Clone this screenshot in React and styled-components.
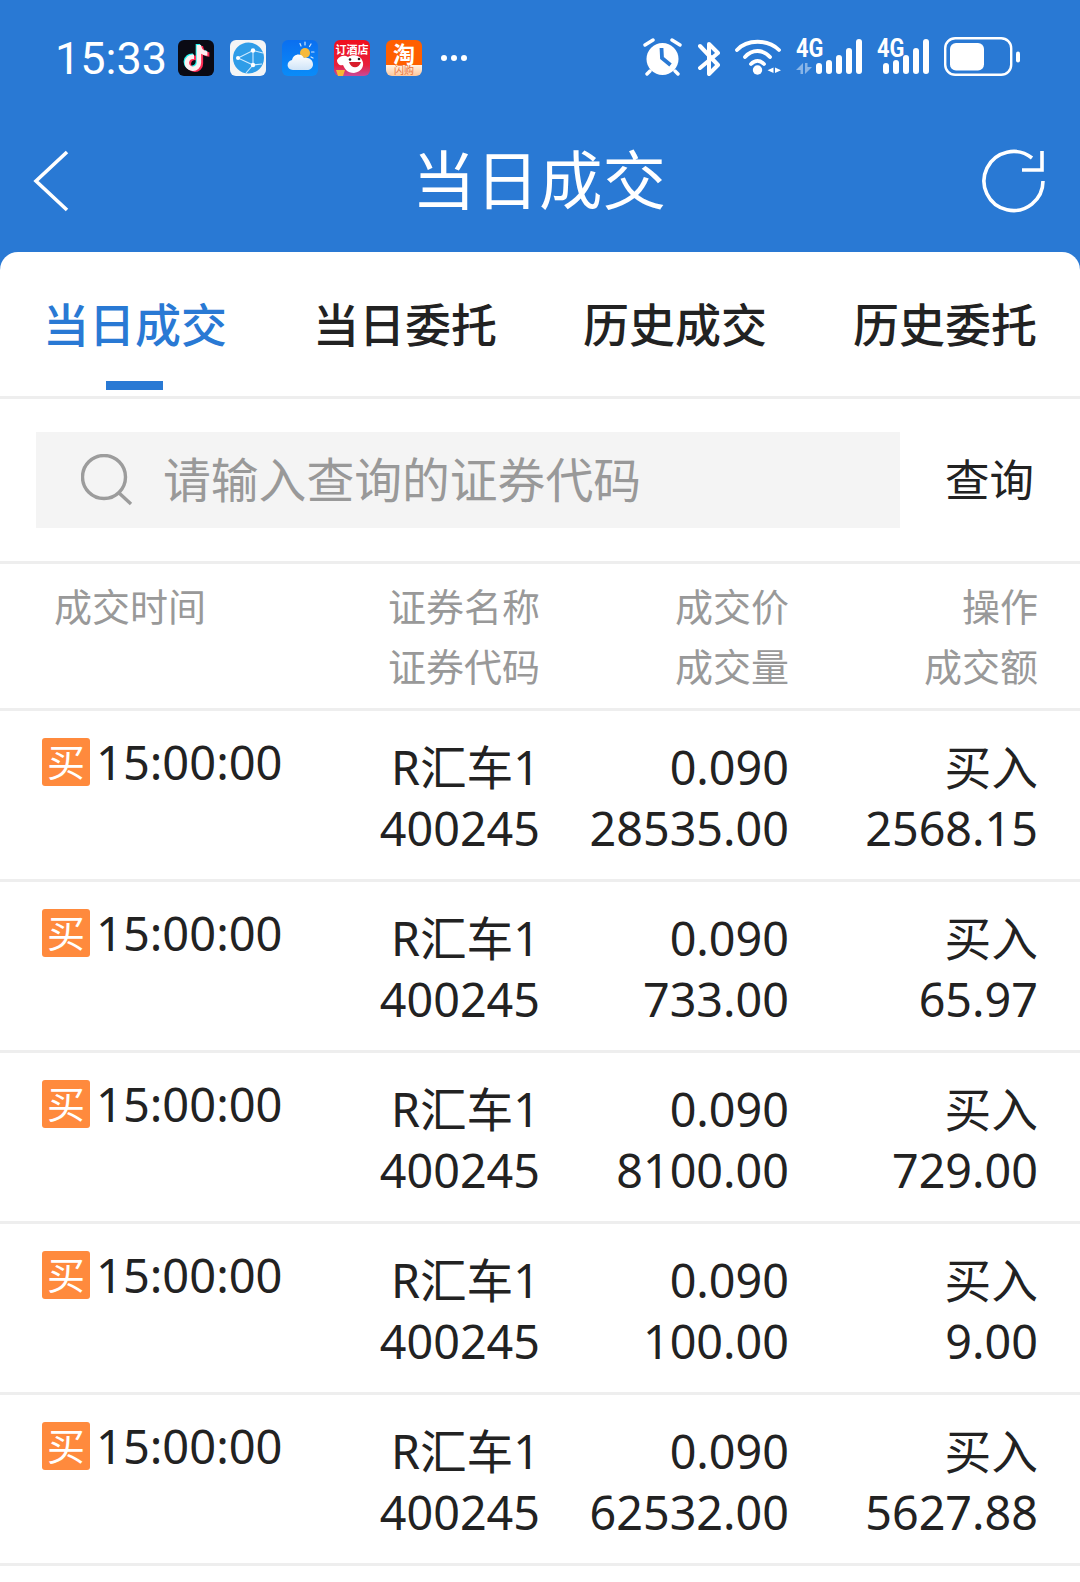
import React from 'react';
import styled, { createGlobalStyle } from 'styled-components';
import { FaTiktok } from 'react-icons/fa';

const rows = [
  { qty: '28535.00', amount: '2568.15' },
  { qty: '733.00', amount: '65.97' },
  { qty: '8100.00', amount: '729.00' },
  { qty: '100.00', amount: '9.00' },
  { qty: '62532.00', amount: '5627.88' },
];

const tabs = ['当日成交', '当日委托', '历史成交', '历史委托'];

const TikTokIcon = () => (
  <TikTokTile>
    <TikTokLayer $x={-1.5} $y={-1} $color="#25f4ee"><FaTiktok size={26} /></TikTokLayer>
    <TikTokLayer $x={1.5} $y={1} $color="#fe2c55"><FaTiktok size={26} /></TikTokLayer>
    <TikTokLayer $x={0} $y={0} $color="#fdeef0"><FaTiktok size={26} /></TikTokLayer>
  </TikTokTile>
);

const BrowserIcon = () => (
  <svg width="36" height="36" viewBox="0 0 36 36">
    <rect width="36" height="36" rx="6" fill="#f4f5f6" />
    <circle cx="18.5" cy="18" r="15.5" fill="#2f9de8" />
    <path d="M33 13 L23 10.5 L8 18 L23 25 L16 33 M23 10.5 L23 25 L32 24" fill="none" stroke="#cfeaff" strokeWidth="1.1" />
    <circle cx="23" cy="10.5" r="2.2" fill="#fff" />
    <circle cx="8" cy="18" r="2" fill="#fff" />
    <circle cx="23" cy="25" r="2.2" fill="#fff" />
  </svg>
);

const WeatherIcon = () => (
  <svg width="36" height="36" viewBox="0 0 36 36">
    <defs>
      <linearGradient id="sky" x1="0" y1="0" x2="0" y2="1">
        <stop offset="0" stopColor="#0a6ff0" />
        <stop offset="1" stopColor="#0a8cf8" />
      </linearGradient>
      <linearGradient id="cloud" x1="0" y1="0" x2="0" y2="1">
        <stop offset="0" stopColor="#ffffff" />
        <stop offset="1" stopColor="#cfe4f8" />
      </linearGradient>
    </defs>
    <rect width="36" height="36" rx="6" fill="url(#sky)" />
    <path d="M18 3.5 L19 6 M23 2 V5 M29 4 L27.5 6.5 M32 12 H29.5 M31 18 L29 17" stroke="#cfe6ff" strokeWidth="1.2" strokeLinecap="round" />
    <circle cx="23" cy="13" r="5" fill="#f6b93b" />
    <path d="M11 30 C4 30 4 21 10 20 C11 14 19 12 22 18 C27 17 31 20 31 24.5 C31 28 28 30 25 30 Z" fill="url(#cloud)" />
  </svg>
);

const HotelIcon = () => (
  <svg width="36" height="36" viewBox="0 0 36 36">
    <defs>
      <linearGradient id="hotel" x1="0" y1="0" x2="0" y2="1">
        <stop offset="0" stopColor="#f0101c" />
        <stop offset="0.7" stopColor="#e8203c" />
        <stop offset="1" stopColor="#c84a9a" />
      </linearGradient>
    </defs>
    <rect width="36" height="36" rx="6" fill="url(#hotel)" />
    <text x="18" y="14" textAnchor="middle" fontSize="11" fontWeight="700" fill="#fff" fontFamily="Noto Sans CJK SC, sans-serif">订酒店</text>
    <path d="M3 20 C6 15 11 15 14 17 C18 14 26 15 28 20 C31 25 28 32 20 33 C13 33 11 29 9 25 C6 26 3 24 3 20 Z" fill="#fff" />
    <circle cx="16" cy="19.5" r="1.3" fill="#222" />
    <circle cx="25" cy="19" r="1.3" fill="#222" />
    <path d="M15 22 C17 29 25 29 27 22 Z" fill="#d81e2c" />
    <path d="M2 30 H11 L9 36 H4 Z" fill="#f7b733" />
  </svg>
);

const AlarmIcon = () => (
  <svg width="40" height="40" viewBox="0 0 40 40">
    <circle cx="19.5" cy="22" r="16" fill="#fff" />
    <path d="M18.5 11 L19 21 L27.5 28" fill="none" stroke="#2979d4" strokeWidth="3.8" />
    <path d="M2 8 L10 3 M37 8 L29 3 M7 34 L4 37 M32 34 L35 37" stroke="#fff" strokeWidth="3.4" strokeLinecap="round" />
  </svg>
);

const BluetoothIcon = () => (
  <svg width="22" height="40" viewBox="0 0 22 40">
    <path d="M2 9 L20 28 L11 37 V7 L20 16 L2 31" fill="none" stroke="#fff" strokeWidth="4" strokeLinecap="round" strokeLinejoin="round" />
  </svg>
);

const WifiIcon = () => (
  <svg width="46" height="40" viewBox="0 0 46 40">
    <path d="M2 13 C12 2 33 2 44 13 M10 20 C17 12 28 12 35 20 M16 27 C20 23 25 23 29 27" fill="none" stroke="#fff" strokeWidth="3.8" strokeLinecap="round" />
    <circle cx="22.5" cy="33" r="4.7" fill="#fff" />
    <path d="M38.5 30.5 V36 L32.5 33.2 Z M40 30.5 V36 L46 33.2 Z" fill="#fff" />
  </svg>
);

const bars = [
  { x: 0, top: 26 },
  { x: 10, top: 23 },
  { x: 20, top: 18 },
  { x: 30, top: 11 },
  { x: 40, top: 2 },
];

const SignalIcon = ({ arrows, width }) => (
  <SignalWrap>
    <SignalLabel>4G</SignalLabel>
    <svg width={width} height="40" viewBox={`0 0 ${width} 40`}>
      {arrows && (
        <path d="M7 26 V37 H4.5 V33 H0 Z M9 26 H11.5 V30 H16 L9 37 Z" fill="#fff" opacity="0.45" />
      )}
      <g fill="#fff">
        {bars.map(b => (
          <rect key={b.x} x={width - 46 + b.x} y={b.top} width="6" height={37 - b.top} rx="3" />
        ))}
      </g>
    </svg>
  </SignalWrap>
);

const BatteryIcon = () => (
  <svg width="76" height="40" viewBox="0 0 76 40">
    <rect x="1.2" y="1.2" width="66" height="36.6" rx="10" fill="none" stroke="#fff" strokeWidth="2.4" />
    <rect x="6" y="6" width="34" height="27.5" rx="6" fill="#fff" />
    <rect x="72" y="14.5" width="4" height="11" rx="2" fill="#fff" />
  </svg>
);

const App = () => (
  <Page>
    <GlobalStyle />
    <StatusBar>
      <StatusLeft>
        <Clock>15:33</Clock>
        <AppIcons>
          <TikTokIcon />
          <BrowserIcon />
          <WeatherIcon />
          <HotelIcon />
          <TaobaoTile>
            <TaobaoChar>淘</TaobaoChar>
            <FlashLabel>闪购</FlashLabel>
          </TaobaoTile>
        </AppIcons>
        <More>
          <Dot /><Dot /><Dot />
        </More>
      </StatusLeft>
      <StatusRight>
        <AlarmIcon />
        <BluetoothIcon />
        <WifiIcon />
        <SignalIcon arrows width={66} />
        <SignalIcon width={52} />
        <BatteryIcon />
      </StatusRight>
    </StatusBar>

    <NavBar>
      <svg width="36" height="62" viewBox="0 0 36 62">
        <path d="M34 2 L3 31 L34 60" fill="none" stroke="#fff" strokeWidth="3.6" />
      </svg>
      <Title>当日成交</Title>
      <RefreshSlot>
        <svg width="64" height="64" viewBox="0 0 64 64">
          <path d="M62 32 A29.5 29.5 0 1 1 51 9" fill="none" stroke="#fff" strokeWidth="3.6" />
          <path d="M61 2 V21 H41" fill="none" stroke="#fff" strokeWidth="3.6" />
        </svg>
      </RefreshSlot>
    </NavBar>

    <Card>
      <Tabs>
        {tabs.map((t, i) => (
          <Tab key={t} $active={i === 0}>{t}</Tab>
        ))}
      </Tabs>

      <SearchRow>
        <SearchBox>
          <svg width="52" height="52" viewBox="0 0 52 52">
            <circle cx="23" cy="23" r="21.5" fill="none" stroke="#9c9c9c" strokeWidth="3.4" />
            <path d="M37 38 L50 50" stroke="#9c9c9c" strokeWidth="3.4" />
          </svg>
          <Placeholder>请输入查询的证券代码</Placeholder>
        </SearchBox>
        <SearchButton>查询</SearchButton>
      </SearchRow>

      <HeadRow>
        <HeadCell $left>成交时间</HeadCell>
        <HeadCell>证券名称<br />证券代码</HeadCell>
        <HeadCell>成交价<br />成交量</HeadCell>
        <HeadCell>操作<br />成交额</HeadCell>
      </HeadRow>

      {rows.map((r, i) => (
        <Row key={i}>
          <TimeCell>
            <Badge>买</Badge>
            <Time>15:00:00</Time>
          </TimeCell>
          <Cell>R汇车1<br />400245</Cell>
          <Cell>0.090<br />{r.qty}</Cell>
          <Cell>买入<br />{r.amount}</Cell>
        </Row>
      ))}
    </Card>
  </Page>
);

export default App;

const GlobalStyle = createGlobalStyle`
  html, body {
    margin: 0;
    padding: 0;
    background: #fff;
  }
  body {
    font-family: "Noto Sans", "Noto Sans CJK SC", sans-serif;
  }
`;

const Page = styled.div`
  width: 1080px;
  height: 1582px;
  overflow: hidden;
  background: #2979d4;
`;

const StatusBar = styled.div`
  height: 110px;
  box-sizing: border-box;
  padding: 37px 60px 0 55px;
  display: flex;
  justify-content: space-between;
  align-items: flex-start;
`;

const StatusLeft = styled.div`
  display: flex;
  align-items: center;
  height: 40px;
  margin-top: 1px;
`;

const Clock = styled.div`
  font-family: "Roboto", sans-serif;
  font-size: 45px;
  color: #fff;
  width: 123px;
`;

const AppIcons = styled.div`
  display: flex;
  gap: 16px;
`;

const TikTokTile = styled.div`
  position: relative;
  width: 36px;
  height: 36px;
  border-radius: 6px;
  background: #0a0a14;
`;

const TikTokLayer = styled.span`
  position: absolute;
  left: ${p => 5 + p.$x}px;
  top: ${p => 5 + p.$y}px;
  color: ${p => p.$color};
  line-height: 0;
`;

const TaobaoTile = styled.div`
  width: 36px;
  height: 36px;
  border-radius: 6px;
  background: linear-gradient(#ff5f00 0, #ff5f00 25px, #fff3e6 25px, #ffc79a 36px);
  display: flex;
  flex-direction: column;
  align-items: center;
`;

const TaobaoChar = styled.div`
  font-family: "Noto Sans CJK SC", sans-serif;
  font-size: 22px;
  font-weight: 700;
  line-height: 24px;
  height: 24px;
  color: #fff;
`;

const FlashLabel = styled.div`
  font-family: "Noto Sans CJK SC", sans-serif;
  font-size: 10px;
  line-height: 12px;
  color: #e8703a;
`;

const More = styled.div`
  display: flex;
  gap: 4px;
  margin-left: 19px;
`;

const Dot = styled.span`
  width: 6px;
  height: 6px;
  border-radius: 50%;
  background: #fff;
`;

const StatusRight = styled.div`
  display: flex;
  align-items: flex-start;
  gap: 15px;
`;

const SignalWrap = styled.div`
  position: relative;
  height: 40px;
  display: flex;
`;

const SignalLabel = styled.span`
  position: absolute;
  left: 0;
  top: -2px;
  font-family: "Roboto", sans-serif;
  font-size: 26px;
  font-weight: 700;
  line-height: 26px;
  color: #fff;
  transform: scaleX(0.84);
  transform-origin: left;
`;

const NavBar = styled.div`
  height: 142px;
  box-sizing: border-box;
  padding: 0 35px 0 33px;
  display: grid;
  grid-template-columns: 1fr auto 1fr;
  align-items: center;
`;

const Title = styled.div`
  font-size: 63.5px;
  line-height: 80px;
  margin-bottom: 3px;
  color: #fff;
`;

const RefreshSlot = styled.div`
  justify-self: end;
  line-height: 0;
`;

const Card = styled.div`
  background: #fff;
  border-radius: 18px 18px 0 0;
  height: 1330px;
`;

const Tabs = styled.div`
  height: 144px;
  display: flex;
  border-bottom: 3px solid #eeeeee;
`;

const Tab = styled.div`
  position: relative;
  flex: 1;
  text-align: center;
  padding-top: 42px;
  font-size: 46px;
  line-height: 60px;
  font-weight: 500;
  color: ${p => (p.$active ? '#2979d4' : '#222')};

  ${p => p.$active && `
    &::after {
      content: '';
      position: absolute;
      left: 106px;
      bottom: 6px;
      width: 57px;
      height: 9px;
      background: #2979d4;
    }
  `}
`;

const SearchRow = styled.div`
  height: 165px;
  box-sizing: border-box;
  padding: 33px 46px 0 36px;
  display: flex;
  justify-content: space-between;
  align-items: flex-start;
  border-bottom: 3px solid #eeeeee;
`;

const SearchBox = styled.div`
  width: 864px;
  height: 96px;
  box-sizing: border-box;
  padding-left: 45px;
  background: #f4f4f4;
  display: flex;
  align-items: center;
  gap: 30px;
`;

const Placeholder = styled.div`
  font-size: 47.8px;
  line-height: 60px;
  color: #999;
`;

const SearchButton = styled.div`
  font-size: 44.5px;
  line-height: 96px;
  color: #222;
`;

const HeadRow = styled.div`
  height: 147px;
  box-sizing: border-box;
  padding: 12px 42px 0 42px;
  display: grid;
  grid-template-columns: 259px 239px 249px 249px;
  border-bottom: 3px solid #eeeeee;
`;

const HeadCell = styled.div`
  font-size: 38px;
  line-height: 60px;
  color: #999;
  text-align: ${p => (p.$left ? 'left' : 'right')};
  padding-left: ${p => (p.$left ? '12px' : '0')};
`;

const Row = styled.div`
  height: 171px;
  box-sizing: border-box;
  padding: 26px 42px 0 42px;
  display: grid;
  grid-template-columns: 259px 239px 249px 249px;
  border-bottom: 3px solid #eeeeee;
`;

const TimeCell = styled.div`
  display: flex;
  align-items: flex-start;
  gap: 6px;
  padding-top: 1px;
`;

const Badge = styled.span`
  width: 48px;
  height: 48px;
  border-radius: 3px;
  background: #ff8a3d;
  color: #fff;
  font-size: 38px;
  line-height: 46px;
  text-align: center;
`;

const Time = styled.span`
  font-size: 47px;
  line-height: 48px;
  color: #222;
`;

const Cell = styled.div`
  font-size: 46.7px;
  line-height: 61px;
  color: #222;
  text-align: right;
`;
